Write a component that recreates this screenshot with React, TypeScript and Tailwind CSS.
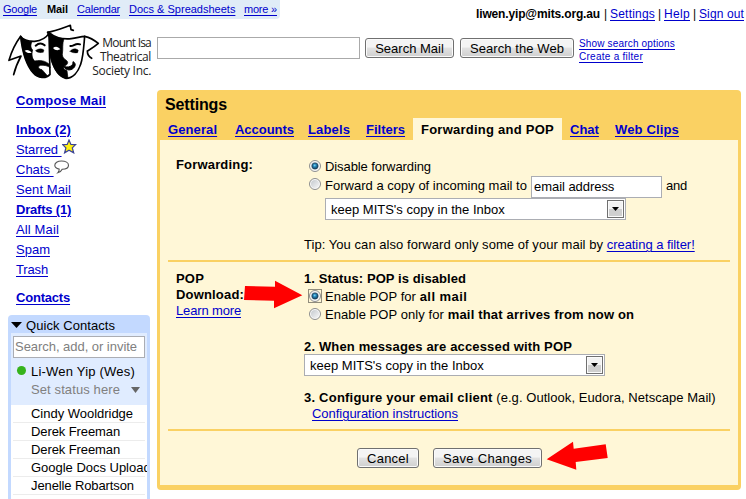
import type { ReactNode } from "react";

const LINK = "text-[#0000cc] underline underline-offset-2 decoration-1";

function A({ className = "", children }: { className?: string; children: ReactNode }) {
  return <a className={`${LINK} ${className}`}>{children}</a>;
}

function Button({ className, children }: { className: string; children: ReactNode }) {
  return (
    <button
      className={`h-5 shrink-0 rounded-[3px] border border-[#707070] bg-linear-to-b from-[#f4f4f4] from-45% via-[#e2e2e2] via-50% to-[#cfcfcf] pt-0.5 text-center leading-[16px] shadow-[inset_0_0_0_1px_#fbfbfb] ${className}`}
    >
      {children}
    </button>
  );
}

function Radio({ on = false, focus = false }: { on?: boolean; focus?: boolean }) {
  return (
    <svg width="14" height="14" viewBox="0 0 14 14" className="mt-px shrink-0">
      <defs>
        <radialGradient id="dot" cx="45%" cy="40%" r="60%">
          <stop offset="0" stopColor="#7fd8f8" />
          <stop offset=".4" stopColor="#2484b8" />
          <stop offset="1" stopColor="#123c5a" />
        </radialGradient>
        <linearGradient id="well" x1="0" y1="0" x2="1" y2="1">
          <stop offset="0" stopColor="#c4c9ce" />
          <stop offset="1" stopColor="#f6f6f6" />
        </linearGradient>
      </defs>
      {focus && <rect x=".5" y=".5" width="13" height="13" fill="none" stroke="#222" strokeDasharray="1 1" />}
      <circle cx="7" cy="7" r="5.5" fill="#fafafa" stroke="#8e8f8f" />
      <circle cx="7" cy="7" r="4" fill="url(#well)" />
      {on && <circle cx="7" cy="7" r="3.1" fill="url(#dot)" stroke="#1b3f5c" strokeWidth=".7" />}
    </svg>
  );
}

function Select() {
  return (
    <div className="flex h-[22px] w-[301px] items-center justify-between border border-[#abadb3] bg-white pr-px pl-[5px]">
      <span className="pt-0.5 leading-4">keep MITS's copy in the Inbox</span>
      <span className="flex h-[18px] w-[17px] items-center justify-center border border-[#707070] bg-linear-to-b from-[#f2f2f2] from-50% to-[#cfcfcf] to-50% shadow-[inset_0_0_0_1px_#fbfbfb]">
        <svg width="7" height="4" viewBox="0 0 7 4">
          <path d="M0 0h7L3.5 4z" />
        </svg>
      </span>
    </div>
  );
}

function Masks() {
  return (
    <svg width="92" height="57" viewBox="24 71 276 171" className="shrink-0" fill="none" stroke="#000" strokeWidth="5" strokeLinejoin="round" strokeLinecap="round">
      <path d="M62 108C44 132 34 156 27 180L63 167C54 184 46 202 41 223" />
      <path d="M62 108C66 116 84 124 104 123C122 121 138 113 147 99L150 222C138 236 114 234 100 218C82 198 68 162 62 108Z" fill="#fff" />
      <path d="M62 108C72 120 84 124 97 123C91 133 91 142 98 149C94 162 96 174 104 182C114 180 130 178 146 190L151 202C142 196 132 194 122 195C112 198 114 206 126 208L142 226C126 236 110 230 98 216C80 192 68 162 62 108Z" fill="#000" strokeWidth="2" />
      <path d="M74 151C82 147 89 150 95 157C87 159 80 158 74 151Z" fill="#fff" stroke="none" />
      <path d="M107 136C116 128 126 128 134 135" strokeWidth="6" />
      <path d="M107 151C114 144 124 143 132 149L130 156C120 158 112 157 107 151Z" fill="#000" strokeWidth="1" />
      <path d="M143 96C166 92 188 83 211 75L213 88L220 90" />
      <path d="M143 96L150 112" />
      <path d="M146 96C166 112 190 118 214 115C230 113 242 109 254 108C251 142 250 168 242 192C234 216 218 234 198 234C176 230 162 204 154 174C148 146 153 122 146 96Z" fill="#fff" />
      <path d="M146 96C160 110 174 114 192 115C186 132 190 144 187 162C187 170 192 176 199 180C205 185 204 190 198 195C187 199 190 208 201 211L204 234C178 236 158 202 152 174C147 146 154 122 146 96Z" fill="#000" strokeWidth="2" />
      <path d="M159 143C166 137 174 138 181 147L172 150Q164 150 159 143Z" fill="#fff" stroke="none" />
      <path d="M211 137C220 139 227 126 240 132" strokeWidth="6" />
      <path d="M210 153C216 144 228 143 235 150L233 157C224 159 216 157 210 153Z" fill="#000" strokeWidth="1" />
      <path d="M190 198C204 203 220 199 219 184C229 188 227 200 217 206C206 212 196 208 190 198Z" fill="#000" strokeWidth="3" />
      <path d="M254 108C272 112 284 120 295 129C280 142 268 148 262 152C262 165 268 170 275 174" />
    </svg>
  );
}

function Contact({ className = "", children }: { className?: string; children: ReactNode }) {
  return (
    <div className="ml-0.5 h-[18px] w-[132px] shrink-0 border-b border-[#ececec] pl-[18px]">
      <div className={`w-[116px] overflow-hidden leading-[18px] whitespace-nowrap ${className}`}>{children}</div>
    </div>
  );
}

function Sidebar() {
  return (
    <aside className="flex w-[157px] shrink-0 flex-col">
      <nav className="flex flex-col pt-px pl-4 leading-5">
        <b className="tracking-[.156px]"><A>Compose Mail</A></b>
        <b className="mt-[9px] tracking-[.092px]"><A>Inbox (2)</A></b>
        <div className="flex h-5">
          <A className="tracking-[-.09px]">Starred&nbsp;</A>
          <svg width="15" height="15" viewBox="0 0 15 14.500" className="-mt-px">
            <path d="M7 .8L8.900 5.200l4.700.2-3.300 3.300 1.400 4.900L7 10.900 2.600 13.600 3.900 8.700.7 5.400l4.500-.2z" fill="#fff010" stroke="#3a4296" strokeWidth="1.200" />
          </svg>
        </div>
        <div className="flex h-5">
          <A>Chats&nbsp;</A>
          <svg width="16" height="14" viewBox="0 0 16 14">
            <path d="M7.500 1C3.500 1 .8 2.700 .8 5.200c0 2 1.600 3.300 4.400 3.900.1 1.500-.4 2.600-1.400 3.700 2-.5 3.600-1.700 4.400-3.500 3.800-.1 6.300-1.700 6.300-4.100C14.500 2.700 11.500 1 7.500 1z" fill="#fff" stroke="#555" strokeWidth="1.100" />
          </svg>
        </div>
        <A className="tracking-[.089px]">Sent Mail</A>
        <b className="tracking-[-.2px]"><A>Drafts (1)</A></b>
        <A className="tracking-[.137px]">All Mail</A>
        <A>Spam</A>
        <A className="tracking-[-.15px]">Trash</A>
        <b className="mt-2 tracking-[-.2px]"><A>Contacts</A></b>
      </nav>

      <section className="mt-[7px] ml-2 flex w-[142px] grow flex-col overflow-hidden rounded-t-[4px] bg-[#c3d9ff] px-[3px]">
        <div className="flex h-[18px] shrink-0 items-center gap-1 leading-[18px]">
          <svg width="11" height="6" viewBox="0 0 11 6" className="mt-0.5"><path d="M0 0h11L5.500 6z" /></svg>
          <span className="pt-1 tracking-[.06px]">Quick Contacts</span>
        </div>
        <div className="h-[72px] shrink-0 bg-[#e0ecff] px-0.5 pt-[3px]">
          <div className="h-[22px] border border-[#abadb3] bg-white pl-px leading-5 tracking-[-.039px] text-[#808080]">Search, add, or invite</div>
          <div className="mt-[5px] flex h-[18px] items-center leading-[18px]">
            <i className="mr-[5px] mb-1 ml-[4px] size-[9px] rounded-full bg-[#36b31c]" />
            <span className="tracking-[.208px]">Li-Wen Yip (Wes)</span>
          </div>
          <div className="flex h-[18px] items-center pl-[18px] leading-[18px] text-[#808080]">
            <span className="w-[100px] tracking-[.103px]">Set status here</span>
            <svg width="9" height="6" viewBox="0 0 9 6"><path d="M0 0h9L4.500 6z" fill="#666" /></svg>
          </div>
        </div>
        <div className="flex h-0 grow flex-col overflow-hidden bg-white">
          <Contact className="tracking-[-.023px]">Cindy Wooldridge</Contact>
          <Contact className="tracking-[-.1px]">Derek Freeman</Contact>
          <Contact className="tracking-[-.1px]">Derek Freeman</Contact>
          <Contact className="tracking-[-.02px]">Google Docs Uploader</Contact>
          <Contact className="tracking-[-.106px]">Jenelle Robartson</Contact>
          <Contact>List Manager</Contact>
        </div>
      </section>
    </aside>
  );
}

function Settings() {
  return (
    <main className="relative h-[400px] w-[584px] rounded-[4px] bg-[#fad163] px-[3px]">
      <h1 className="h-7 pt-[5px] pl-[5px] text-[16px] leading-5 font-bold tracking-[-.14px]">Settings</h1>
      <div className="flex h-[22px] pl-2 leading-6 font-bold">
        <A className="w-[67px] tracking-[.1px]">General</A>
        <A className="w-[73px] tracking-[-.03px]">Accounts</A>
        <A className="w-[58px] tracking-[.135px]">Labels</A>
        <A className="w-[47px]">Filters</A>
        <span className="w-[149px] bg-[#fff7d7] pl-2 tracking-[.246px]">Forwarding and POP</span>
        <A className="ml-2 w-[45px]">Chat</A>
        <A className="tracking-[.155px]">Web Clips</A>
      </div>
      <div className="h-[345px] bg-[#fff7d7] px-2">
        <div className="flex h-[122px] border-b-2 border-[#fad163]">
          <b className="w-[136px] shrink-0 pt-[17px] pl-2 leading-4 tracking-[.172px]">Forwarding:</b>
          <div className="flex grow flex-col whitespace-nowrap">
            <div className="mt-[18px] flex h-[18px] gap-[3px] pl-1 leading-[18px]">
              <Radio on />
              <span className="tracking-[-.093px]">Disable forwarding</span>
            </div>
            <div className="flex h-[22px] pl-1 leading-5">
              <span className="flex gap-[3px]"><Radio /><span className="tracking-[.012px]">Forward a copy of incoming mail to</span></span>
              <div className="ml-1 h-[22px] w-[131px] border border-[#abadb3] bg-white pl-0.5 tracking-[-.05px]">email address</div>
              <span className="ml-1 tracking-[-.2px]">and</span>
            </div>
            <div className="pl-[21px]"><Select /></div>
            <div className="mt-[17px] leading-4 tracking-[.05px]">
              Tip: You can also forward only some of your mail by <A className="tracking-[-.049px]">creating a filter!</A>
            </div>
          </div>
        </div>
        <div className="flex h-[169px] border-b-2 border-[#fad163]">
          <div className="w-[136px] shrink-0 pt-[9px] pl-2 leading-4">
            <b className="block tracking-[.177px]">POP</b>
            <b className="block tracking-[.174px]">Download:</b>
            <A className="tracking-[-.148px]">Learn more</A>
          </div>
          <div className="pt-2 whitespace-nowrap">
            <b className="block leading-[18px] tracking-[.071px]">1. Status: POP is disabled</b>
            <div className="flex h-[18px] gap-[3px] pl-1 leading-[18px]">
              <Radio on focus />
              <span className="tracking-[.065px]">Enable POP for <b className="tracking-[.45px]">all mail</b></span>
            </div>
            <div className="flex h-[18px] gap-[3px] pl-1 leading-[18px]">
              <Radio />
              <span className="tracking-[.076px]">Enable POP only for <b className="tracking-[.18px]">mail that arrives from now on</b></span>
            </div>
            <b className="mt-[15px] block h-[15px] leading-4 tracking-[.15px]">2. When messages are accessed with POP</b>
            <Select />
            <div className="mt-[14px] leading-4 tracking-[.05px]">
              <b className="tracking-[.22px]">3. Configure your email client</b> (e.g. Outlook, Eudora, Netscape Mail)
            </div>
            <div className="pl-2 leading-4"><A className="tracking-[-.027px]">Configuration instructions</A></div>
          </div>
        </div>
        <div className="flex gap-[14px] pt-[17px] pl-[189px]">
          <Button className="w-[62px] tracking-[.255px]">Cancel</Button>
          <Button className="w-[109px] tracking-[.31px]">Save Changes</Button>
        </div>
      </div>
      <svg className="absolute top-[188px] left-[86px]" width="60" height="32" viewBox="243 278 60 32">
        <path d="M245 286L275 286.700V280.700L302.300 295.300 274 308.300V300.700L244 300z" fill="#f00" />
      </svg>
      <svg className="absolute top-[350px] left-[388px]" width="64" height="32" viewBox="545 440 64 32">
        <path d="M546.700 459.300L573 441.700 573.700 448.700 605.700 444.300 607.700 458 575.700 462 576.300 469.700z" fill="#f00" />
      </svg>
    </main>
  );
}

export default function App() {
  return (
    <div className="flex h-[499px] w-[746px] flex-col overflow-hidden bg-white font-['Liberation_Sans',Arial,sans-serif] text-[13px] text-black">
      <header className="flex h-[90px] shrink-0 flex-col">
        <div className="flex h-6 justify-between">
          <div className="flex h-[19px] w-[280px] rounded-br-[4px] bg-[#e0ecf7] pl-[3px] text-[11px] leading-[18px] whitespace-nowrap">
            <span className="w-11 tracking-[-.247px]"><A>Google</A></span>
            <b className="w-[30px] tracking-[-.1px]">Mail</b>
            <span className="w-[52px] tracking-[-.205px]"><A>Calendar</A></span>
            <span className="w-[115px]"><A>Docs &amp; Spreadsheets</A></span>
            <span className="tracking-[-.208px]"><A>more »</A></span>
          </div>
          <div className="flex pt-1.5 pr-0.5 text-[12px] leading-4">
            <b className="tracking-[-.146px]">liwen.yip@mits.org.au</b>
            <span className="w-[10px] pl-[4px]">|</span>
            <A className="tracking-[.205px]">Settings</A>
            <span className="w-[9px] pl-[3px]">|</span>
            <A className="tracking-[.328px]">Help</A>
            <span className="w-[9px] pl-[3px]">|</span>
            <A className="tracking-[.119px]">Sign out</A>
          </div>
        </div>
        <div className="flex h-[60px] pl-2">
          <Masks />
          <div className="-ml-[9px] flex w-[60px] shrink-0 flex-col items-end pt-[12px] font-['Open_Sans'] text-[12px] leading-[14px] whitespace-nowrap text-[#222]">
            <span className="tracking-[-.8px]">Mount Isa</span>
            <span className="tracking-[-.4px]">Theatrical</span>
            <span className="tracking-[-.3px]">Society Inc.</span>
          </div>
          <div className="mt-[13px] ml-1.5 h-[22px] w-[203px] border border-[#aaa] bg-white" />
          <div className="mt-[14px] ml-[5px] flex gap-[6px]">
            <Button className="w-[89px]">Search Mail</Button>
            <Button className="w-[114px] tracking-[.073px]">Search the Web</Button>
          </div>
          <div className="mt-[13px] ml-[5px] flex flex-col text-[10px] leading-[13px]">
            <A className="tracking-[.166px]">Show search options</A>
            <A className="tracking-[.265px]">Create a filter</A>
          </div>
        </div>
      </header>
      <div className="flex h-[409px]">
        <Sidebar />
        <Settings />
      </div>
    </div>
  );
}
